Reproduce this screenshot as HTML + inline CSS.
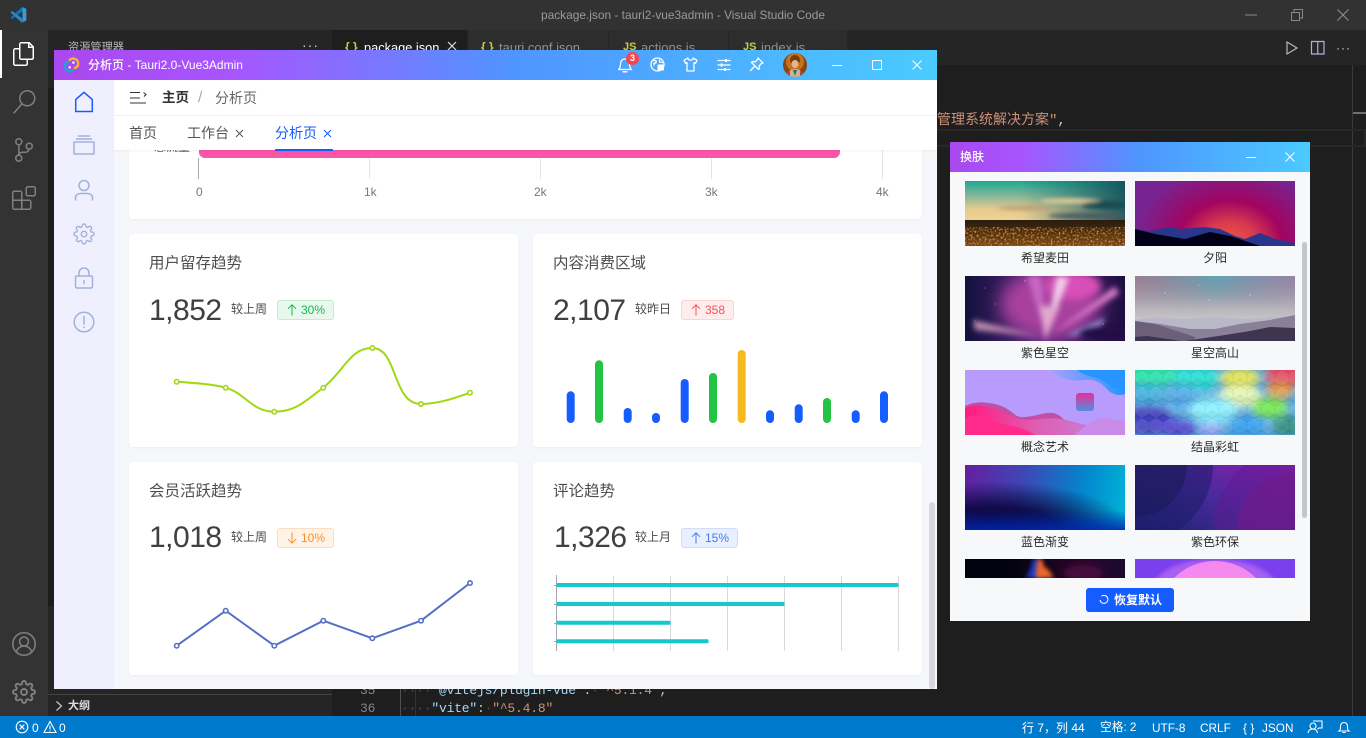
<!DOCTYPE html>
<html lang="zh-CN"><head><meta charset="utf-8"><title>package.json - tauri2-vue3admin</title>
<style>
*{box-sizing:border-box}
html,body{margin:0;padding:0;width:1366px;height:738px;overflow:hidden;background:#1e1e1e;font-family:"Liberation Sans","Noto Sans CJK SC",sans-serif}
.a{position:absolute}
.t{position:absolute;white-space:nowrap}
svg{position:absolute;overflow:visible;display:block}
.grad{background:linear-gradient(90deg,#a948ee 0%,#a855ff 20%,#4f95ff 52%,#4acbff 100%)}
.card{position:absolute;background:#fff;border-radius:4px;box-shadow:0 1px 2px rgba(0,0,0,.04)}
.ct{position:absolute;font-size:15.5px;line-height:22px;color:#4f4f4f;white-space:nowrap}
.num{position:absolute;font-size:30px;line-height:36px;color:#404040;letter-spacing:-.5px;white-space:nowrap}
.cmp{position:absolute;font-size:12px;line-height:18px;color:#4a4a4a;white-space:nowrap}
.tag{position:absolute;height:20px;border-radius:3px;border:1px solid;font-size:12px;line-height:18px;white-space:nowrap}
.tag svg{left:8px;top:3px;fill:none;stroke:currentColor;stroke-width:1}
.tag span{position:absolute;left:23px;top:0}
.wp{position:absolute;width:160px;height:65px;overflow:hidden}
.lb{position:absolute;width:160px;text-align:center;font-size:12px;line-height:18px;color:#2b2b2b}
.ic{fill:none;stroke:#9fb1dc;stroke-width:1.5;stroke-linecap:round;stroke-linejoin:round}
.w{fill:none;stroke:#fff;stroke-width:1.3;stroke-linecap:round;stroke-linejoin:round}
.code{position:absolute;font-family:"Liberation Mono","Noto Sans CJK SC",monospace;font-size:13px;letter-spacing:-.2px;line-height:18px;white-space:pre}
.sb{position:absolute;top:720px;font-size:12px;line-height:16px;color:#fff;white-space:nowrap}
</style></head><body>
<svg width="0" height="0" style="position:absolute"><defs>
<symbol id="gear" viewBox="0 0 24 24"><circle cx="12" cy="12" r="3"/><path d="M19.4 15a1.65 1.65 0 0 0 .33 1.82l.06.06a2 2 0 0 1 0 2.83 2 2 0 0 1-2.83 0l-.06-.06a1.65 1.65 0 0 0-1.82-.33 1.65 1.65 0 0 0-1 1.51V21a2 2 0 0 1-2 2 2 2 0 0 1-2-2v-.09A1.65 1.65 0 0 0 9 19.4a1.65 1.65 0 0 0-1.82.33l-.06.06a2 2 0 0 1-2.83 0 2 2 0 0 1 0-2.83l.06-.06a1.65 1.65 0 0 0 .33-1.82 1.65 1.65 0 0 0-1.51-1H3a2 2 0 0 1-2-2 2 2 0 0 1 2-2h.09A1.65 1.65 0 0 0 4.6 9a1.65 1.65 0 0 0-.33-1.82l-.06-.06a2 2 0 0 1 0-2.83 2 2 0 0 1 2.83 0l.06.06a1.65 1.65 0 0 0 1.82.33H9a1.65 1.65 0 0 0 1-1.51V3a2 2 0 0 1 2-2 2 2 0 0 1 2 2v.09a1.65 1.65 0 0 0 1 1.51 1.65 1.65 0 0 0 1.82-.33l.06-.06a2 2 0 0 1 2.83 0 2 2 0 0 1 0 2.83l-.06.06a1.65 1.65 0 0 0-.33 1.82V9a1.65 1.65 0 0 0 1.51 1H21a2 2 0 0 1 2 2 2 2 0 0 1-2 2h-.09a1.65 1.65 0 0 0-1.51 1z"/></symbol>
<filter id="blur2" x="-30%" y="-30%" width="160%" height="160%"><feGaussianBlur stdDeviation="2"/></filter>
<filter id="blur3" x="-30%" y="-30%" width="160%" height="160%"><feGaussianBlur stdDeviation="3"/></filter>
<filter id="blur4" x="-30%" y="-30%" width="160%" height="160%"><feGaussianBlur stdDeviation="4"/></filter>
<filter id="blur6" x="-30%" y="-30%" width="160%" height="160%"><feGaussianBlur stdDeviation="6"/></filter>
<filter id="blur8" x="-30%" y="-30%" width="160%" height="160%"><feGaussianBlur stdDeviation="8"/></filter>
</defs></svg>

<!-- VS Code chrome -->
<div class="a" style="left:0;top:0;width:1366px;height:30px;background:#323233"></div>
<svg style="left:10px;top:7px" width="16" height="16" viewBox="0 0 24 24"><path fill="#2489ca" d="M1.1 8.6s-.6-.4.1-1l1.6-1.4s.5-.5 1 0l14.4 10.9v5.2s0 .8-1 .7z"/><path fill="#1070b3" d="M4.9 12 1.1 15.4s-.4.3 0 .9l1.8 1.6s.4.5 1 0l4.1-3.1z"/><path fill="#0877b9" d="m11.7 12 7-5.4-.1-5.3s-.3-1.2-1.3-.5L8 9z"/><path fill="#3c99d4" d="M17.5 23c.4.4.9.3.9.3l5.5-2.7c.7-.5.6-1 .6-1V3.4c0-.6-.6-.8-.6-.8L19.1.3c-.9-.6-1.4.1-1.4.1s.7-.5 1 .4v21.5c0 .1 0 .3-.1.4-.1.3-.5.6-1.5.4z"/></svg>
<div class="t" style="left:541px;top:7px;font-size:11.9px;line-height:17px;color:#9a9a9a">package.json - tauri2-vue3admin - Visual Studio Code</div>
<svg style="left:1245px;top:9px" width="12" height="12"><path d="M0 6h12" stroke="#8a8a8a" stroke-width="1"/></svg>
<svg style="left:1291px;top:9px" width="12" height="12"><path d="M.5 3.5h8v8h-8zM3 3.5V.5h8.5v8.5H8.5" fill="none" stroke="#8a8a8a"/></svg>
<svg style="left:1337px;top:9px" width="12" height="12"><path d="M.5.5l11 11M11.500.5l-11 11" fill="none" stroke="#8a8a8a" stroke-width="1.2"/></svg>

<!-- activity bar -->
<div class="a" style="left:0;top:30px;width:48px;height:686px;background:#333"></div>
<div class="a" style="left:0;top:30px;width:2px;height:48px;background:#fff"></div>
<svg style="left:12px;top:42px" width="24" height="24" viewBox="0 0 24 24"><path fill="#fff" d="M17.5 0h-9L7 1.5V6H2.500L1 7.500v15.070L2.500 24h12.070L16 22.570V18h4.700l1.300-1.430V4.500L17.500 0zm0 2.120l2.380 2.380H17.500V2.120zm-3 20.380h-12v-15H7v9.070L8.500 18h6v4.500zm6-6h-12v-15H16V6h4.500v10.500z"/></svg>
<svg style="left:12px;top:90px" width="24" height="24" viewBox="0 0 24 24"><path fill="#808080" d="M15.250 0a8.250 8.250 0 0 0-6.180 13.720L1 22.880l1.120 1 8.050-9.120A8.251 8.251 0 1 0 15.250.01V0zm0 15a6.750 6.750 0 1 1 0-13.500 6.750 6.750 0 0 1 0 13.500z"/></svg>
<svg style="left:12px;top:138px" width="24" height="24" viewBox="0 0 24 24"><path fill="#808080" d="M21.007 8.222A3.738 3.738 0 0 0 15.045 5.200a3.737 3.737 0 0 0 1.156 6.583 2.988 2.988 0 0 1-2.668 1.670h-2.990a4.456 4.456 0 0 0-2.989 1.165V7.400a3.737 3.737 0 1 0-1.494 0v9.117a3.776 3.776 0 1 0 1.816.099 2.990 2.990 0 0 1 2.668-1.667h2.990a4.484 4.484 0 0 0 4.223-3.039 3.736 3.736 0 0 0 3.250-3.687zM4.565 3.738a2.242 2.242 0 1 1 4.484 0 2.242 2.242 0 0 1-4.484 0zm4.484 16.441a2.242 2.242 0 1 1-4.484 0 2.242 2.242 0 0 1 4.484 0zm8.221-9.715a2.242 2.242 0 1 1 0-4.485 2.242 2.242 0 0 1 0 4.485z"/></svg>
<svg style="left:12px;top:186px" width="24" height="24" viewBox="0 0 24 24"><path fill="#808080" d="M13.500 1.500L15 0h7.500L24 1.500V9l-1.500 1.500H15L13.500 9V1.500zm1.500 0V9h7.500V1.500H15zM0 15V6l1.500-1.500H9L10.500 6v7.500H18l1.500 1.500v7.500L18 24H1.500L0 22.500V15zm9-1.500V6H1.500v7.500H9zM9 15H1.500v7.500H9V15zm1.500 7.500H18V15h-7.500v7.500z"/></svg>
<svg style="left:12px;top:632px" width="24" height="24" viewBox="0 0 24 24"><g fill="none" stroke="#808080" stroke-width="1.500"><circle cx="12" cy="12" r="11.200"/><circle cx="12" cy="9.500" r="4.500"/><path d="M4.500 20c1-4 4-6 7.500-6s6.500 2 7.500 6"/></g></svg>
<svg style="left:12px;top:680px" width="24" height="24" fill="none" stroke="#808080" stroke-width="1.900"><use href="#gear" width="24" height="24"/></svg>

<!-- sidebar -->
<div class="a" style="left:48px;top:30px;width:284px;height:686px;background:#252526"></div>
<div class="a" style="left:48px;top:88px;width:6px;height:518px;background:#1c1c1c"></div>
<div class="t" style="left:68px;top:40px;font-size:11.200px;line-height:16px;color:#bbb">资源管理器</div>
<div class="t" style="left:302px;top:36px;font-size:14px;line-height:18px;color:#ccc;letter-spacing:1px">···</div>
<div class="a" style="left:48px;top:694px;width:284px;height:1px;background:#444"></div>
<svg style="left:54px;top:700px" width="10" height="12"><path d="M2.500 1.500l5 4.500-5 4.500" fill="none" stroke="#ccc" stroke-width="1.200"/></svg>
<div class="t" style="left:68px;top:698px;font-size:11px;line-height:16px;font-weight:bold;color:#ddd">大纲</div>

<!-- tab bar -->
<div class="a" style="left:332px;top:30px;width:1034px;height:35px;background:#252526"></div>
<div class="a" style="left:332px;top:30px;width:135px;height:35px;background:#1e1e1e"></div>
<div class="a" style="left:467px;top:30px;width:141px;height:35px;background:#2d2d2d;border-left:1px solid #252526"></div>
<div class="a" style="left:608px;top:30px;width:120px;height:35px;background:#2d2d2d;border-left:1px solid #252526"></div>
<div class="a" style="left:728px;top:30px;width:120px;height:35px;background:#2d2d2d;border-left:1px solid #252526;border-right:1px solid #252526"></div>
<div class="t" style="left:345px;top:39px;font-size:12px;line-height:16px;font-weight:bold;color:#cbcb41">{ }</div>
<div class="t" style="left:364px;top:39px;font-size:12.800px;line-height:18px;color:#fff">package.json</div>
<svg style="left:447px;top:41px" width="10" height="10"><path d="M1 1l8 8M9 1l-8 8" stroke="#ddd" stroke-width="1.200"/></svg>
<div class="t" style="left:481px;top:39px;font-size:12px;line-height:16px;font-weight:bold;color:#cbcb41">{ }</div>
<div class="t" style="left:499px;top:39px;font-size:13px;line-height:18px;color:#8f8f8f">tauri.conf.json</div>
<div class="t" style="left:623px;top:39px;font-size:11px;line-height:16px;font-weight:bold;color:#cbcb41">JS</div>
<div class="t" style="left:641px;top:39px;font-size:13px;line-height:18px;color:#8f8f8f">actions.js</div>
<div class="t" style="left:743px;top:39px;font-size:11px;line-height:16px;font-weight:bold;color:#cbcb41">JS</div>
<div class="t" style="left:761px;top:39px;font-size:13px;line-height:18px;color:#8f8f8f">index.js</div>
<svg style="left:1285px;top:41px" width="14" height="14"><path d="M2 1l10 6-10 6z" fill="none" stroke="#b8b8b8" stroke-width="1.200"/></svg>
<svg style="left:1311px;top:41px" width="14" height="14"><path d="M.5.500h12.500v12.500H.5zM6.750 .5V13" fill="none" stroke="#b9a9e8" stroke-width="1.200"/></svg>
<div class="t" style="left:1336px;top:39px;font-size:12px;line-height:18px;color:#ddd;letter-spacing:1px">···</div>

<!-- editor content -->
<div class="a" style="left:1352px;top:65px;width:1px;height:651px;background:#3a3a3a"></div>
<div class="a" style="left:1353px;top:112px;width:13px;height:2px;background:#6f6f6f"></div>
<div class="a" style="left:937px;top:129px;width:429px;height:18px;border-top:2px solid #282828;border-bottom:2px solid #282828;border-right:2px solid #282828"></div>
<div class="t" style="left:937px;top:111px;font-family:'Liberation Mono','Noto Sans CJK SC',monospace;font-size:14px;line-height:20px;color:#ce9178">管理系统解决方案"<span style="color:#ccc">,</span></div>
<div class="a" style="left:400px;top:689px;width:1px;height:27px;background:#505050"></div>
<div class="a" style="left:415px;top:689px;width:1px;height:27px;background:#333"></div>
<div class="code" style="left:360px;top:682px;color:#858585">35</div>
<div class="code" style="left:360px;top:700px;color:#858585">36</div>
<div class="code" style="left:401px;top:682px"><span style="color:#4a4a4a">····</span><span style="color:#9cdcfe">"@vitejs/plugin-vue"</span><span style="color:#ccc">:</span><span style="color:#4a4a4a">·</span><span style="color:#ce9178">"^5.1.4"</span><span style="color:#ccc">,</span></div>
<div class="code" style="left:401px;top:700px"><span style="color:#4a4a4a">····</span><span style="color:#9cdcfe">"vite"</span><span style="color:#ccc">:</span><span style="color:#4a4a4a">·</span><span style="color:#ce9178">"^5.4.8"</span></div>

<!-- status bar -->
<div class="a" style="left:0;top:716px;width:1366px;height:22px;background:#007acc"></div>
<svg style="left:15px;top:720px" width="14" height="14"><g fill="none" stroke="#fff" stroke-width="1.100"><circle cx="7" cy="7" r="5.800"/><path d="M4.700 4.700l4.600 4.600M9.300 4.700l-4.600 4.600"/></g></svg>
<div class="sb" style="left:32px">0</div>
<svg style="left:43px;top:720px" width="14" height="14"><path d="M7 1.500l6 11H1z M7 5.500v4M7 10.500v1" fill="none" stroke="#fff" stroke-width="1.100"/></svg>
<div class="sb" style="left:59px">0</div>
<div class="sb" style="left:1022px">行 7，列 44</div>
<div class="sb" style="left:1100px;font-size:11.700px">空格: 2</div>
<div class="sb" style="left:1152px;font-size:11.800px">UTF-8</div>
<div class="sb" style="left:1200px;font-size:11.800px">CRLF</div>
<div class="sb" style="left:1243px">{ }</div>
<div class="sb" style="left:1262px;font-size:11.800px">JSON</div>
<svg style="left:1307px;top:720px" width="16" height="14"><g fill="none" stroke="#fff" stroke-width="1.100"><circle cx="6" cy="6" r="3"/><path d="M1 13c.5-3 2.500-4 5-4s4 1 4.500 4M6 1h9v7h-3l-1.500 1"/></g></svg>
<svg style="left:1337px;top:720px" width="14" height="14"><path d="M2 11c1.500-1 1.500-2.500 1.500-5a3.500 3.500 0 0 1 7 0c0 2.500 0 4 1.500 5zM5.500 12.500h3" fill="none" stroke="#fff" stroke-width="1.100"/></svg>

<!-- MAIN WINDOW -->
<div class="a" style="left:54px;top:50px;width:883px;height:639px;background:#f5f7fa;overflow:hidden">
  <div class="a" style="left:0;top:100px;width:883px;height:539px">
    <div class="card" style="left:75px;top:-40px;width:793px;height:109px"></div>
    <div class="t" style="left:100px;top:-12px;font-size:12px;line-height:18px;color:#666">总流量</div>
    <div class="a" style="left:145px;top:-2px;width:641px;height:10px;background:#f956a5;border-radius:0 0 6px 6px"></div>
    <div class="a" style="left:144px;top:8px;width:1px;height:21px;background:#a9a9ae"></div>
    <div class="a" style="left:315px;top:8px;width:1px;height:21px;background:#e2e4ec"></div>
    <div class="a" style="left:486px;top:8px;width:1px;height:21px;background:#e2e4ec"></div>
    <div class="a" style="left:657px;top:8px;width:1px;height:21px;background:#e2e4ec"></div>
    <div class="a" style="left:828px;top:0;width:1px;height:29px;background:#e2e4ec"></div>
    <div class="t" style="left:142px;top:34px;font-size:12px;line-height:16px;color:#777">0</div>
    <div class="t" style="left:310px;top:34px;font-size:12px;line-height:16px;color:#777">1k</div>
    <div class="t" style="left:480px;top:34px;font-size:12px;line-height:16px;color:#777">2k</div>
    <div class="t" style="left:651px;top:34px;font-size:12px;line-height:16px;color:#777">3k</div>
    <div class="t" style="left:822px;top:34px;font-size:12px;line-height:16px;color:#777">4k</div>

    <div class="card" style="left:75px;top:84px;width:389px;height:213px"></div>
    <div class="card" style="left:479px;top:84px;width:389px;height:213px"></div>
    <div class="card" style="left:75px;top:312px;width:389px;height:213px"></div>
    <div class="card" style="left:479px;top:312px;width:389px;height:213px"></div>

    <div class="ct" style="left:95px;top:103px">用户留存趋势</div>
    <div class="num" style="left:95px;top:143px">1,852</div>
    <div class="cmp" style="left:177px;top:150px">较上周</div>
    <div class="tag" style="left:223px;top:150px;width:57px;background:#e8f8ee;border-color:#c3ecd0;color:#15b84a"><svg width="12" height="12"><path d="M6 11.500V.8M2 4.800l4-4 4 4"/></svg><span>30%</span></div>

    <div class="ct" style="left:499px;top:103px">内容消费区域</div>
    <div class="num" style="left:499px;top:143px">2,107</div>
    <div class="cmp" style="left:581px;top:150px">较昨日</div>
    <div class="tag" style="left:627px;top:150px;width:53px;background:#ffecec;border-color:#fdd3d6;color:#f9505a"><svg width="12" height="12"><path d="M6 11.500V.8M2 4.800l4-4 4 4"/></svg><span>358</span></div>

    <div class="ct" style="left:95px;top:331px">会员活跃趋势</div>
    <div class="num" style="left:95px;top:370px">1,018</div>
    <div class="cmp" style="left:177px;top:378px">较上周</div>
    <div class="tag" style="left:223px;top:378px;width:57px;background:#fff2e6;border-color:#fddcc0;color:#ff8f26"><svg width="12" height="12"><path d="M6 .5v10.700M2 7.200l4 4 4-4"/></svg><span>10%</span></div>

    <div class="ct" style="left:499px;top:331px">评论趋势</div>
    <div class="num" style="left:500px;top:370px">1,326</div>
    <div class="cmp" style="left:581px;top:378px">较上月</div>
    <div class="tag" style="left:627px;top:378px;width:57px;background:#e8effe;border-color:#cfdcfb;color:#3f7bf5"><svg width="12" height="12"><path d="M6 11.500V.8M2 4.800l4-4 4 4"/></svg><span>15%</span></div>

    <!-- scrollbar -->
    <div class="a" style="left:875px;top:352px;width:6px;height:187px;background:#d6d8dd;border-radius:3px"></div>
  </div>

  <!-- Charts (page coords shifted) -->
  <svg style="left:-54px;top:-50px" width="1366" height="738" viewBox="0 0 1366 738">
    <path d="M176.700 381.700C195 383 212 384 225.700 387.700C245 393 252 411.700 274.300 411.700C296 411.700 305 401 323.300 387.700C345 370 350 348 372.300 348C398 348 392 404 421 404C438 404 455 398 470 392.700" fill="none" stroke="#a0d911" stroke-width="2"/>
    <g fill="#fff" stroke="#a0d911" stroke-width="1.600"><circle cx="176.700" cy="381.700" r="2.200"/><circle cx="225.700" cy="387.700" r="2.200"/><circle cx="274.300" cy="411.700" r="2.200"/><circle cx="323.300" cy="387.700" r="2.200"/><circle cx="372.300" cy="348" r="2.200"/><circle cx="421" cy="404" r="2.200"/><circle cx="470" cy="392.700" r="2.200"/></g>
    <path d="M176.700 645.700L225.700 610.700L274.300 645.700L323.300 620.700L372.300 638.300L421 620.700L470 583" fill="none" stroke="#5470c6" stroke-width="2"/>
    <g fill="#fff" stroke="#5470c6" stroke-width="1.600"><circle cx="176.700" cy="645.700" r="2.200"/><circle cx="225.700" cy="610.700" r="2.200"/><circle cx="274.300" cy="645.700" r="2.200"/><circle cx="323.300" cy="620.700" r="2.200"/><circle cx="372.300" cy="638.300" r="2.200"/><circle cx="421" cy="620.700" r="2.200"/><circle cx="470" cy="583" r="2.200"/></g>
    <g>
      <rect x="566.700" y="391.300" width="8" height="31.700" rx="4" fill="#165dff"/>
      <rect x="595" y="360.300" width="8" height="62.700" rx="4" fill="#23c343"/>
      <rect x="623.700" y="408" width="8" height="15" rx="4" fill="#165dff"/>
      <rect x="652" y="413" width="8" height="10" rx="4" fill="#165dff"/>
      <rect x="680.700" y="379" width="8" height="44" rx="4" fill="#165dff"/>
      <rect x="709" y="373" width="8" height="50" rx="4" fill="#23c343"/>
      <rect x="737.700" y="350" width="8" height="73" rx="4" fill="#f7ba1e"/>
      <rect x="766" y="410.300" width="8" height="12.700" rx="4" fill="#165dff"/>
      <rect x="794.700" y="404.300" width="8" height="18.700" rx="4" fill="#165dff"/>
      <rect x="823" y="398" width="8" height="25" rx="4" fill="#23c343"/>
      <rect x="851.700" y="410.300" width="8" height="12.700" rx="4" fill="#165dff"/>
      <rect x="880" y="391.300" width="8" height="31.700" rx="4" fill="#165dff"/>
    </g>
    <g fill="#d9d9dc">
      <rect x="613" y="576" width="1" height="75"/><rect x="670" y="576" width="1" height="75"/><rect x="727" y="576" width="1" height="75"/><rect x="784" y="576" width="1" height="75"/><rect x="841" y="576" width="1" height="75"/><rect x="898" y="576" width="1" height="75"/>
    </g>
    <rect x="556" y="575" width="1" height="76" fill="#a6a6b0"/>
    <g fill="#a6a6b0"><rect x="554" y="585" width="2" height="1"/><rect x="554" y="604" width="2" height="1"/><rect x="554" y="623" width="2" height="1"/><rect x="554" y="641" width="2" height="1"/></g>
    <g fill="#13c9cc">
      <rect x="556.500" y="583" width="342" height="4" rx="1"/>
      <rect x="556.500" y="602" width="228" height="4" rx="1"/>
      <rect x="556.500" y="620.700" width="114" height="4" rx="1"/>
      <rect x="556.500" y="639.300" width="152" height="4" rx="1"/>
    </g>
  </svg>

  <!-- Sidebar -->
  <div class="a" style="left:0;top:30px;width:60px;height:609px;background:#f0effd"></div>
  <svg style="left:20px;top:41px" width="20" height="22" viewBox="0 0 20 22"><path d="M1.700 8.600L10 1.300l8.300 7.300v11.900H1.700z" fill="none" stroke="#165dff" stroke-width="1.500" stroke-linejoin="round"/></svg>
  <svg style="left:19px;top:84px" width="22" height="22" viewBox="0 0 22 22"><path class="ic" d="M1 8h20v12H1zM3.500 5h15M5.500 2h11"/></svg>
  <svg style="left:20px;top:129px" width="20" height="22" viewBox="0 0 20 22"><g class="ic"><circle cx="10" cy="6.500" r="5"/><path d="M1.500 21v-2c0-3 2.500-4.500 5-4.500h7c2.500 0 5 1.500 5 4.500v2"/></g></svg>
  <svg style="left:19px;top:173px" width="22" height="22" viewBox="0 0 24 24" class="ic"><use href="#gear" width="24" height="24"/></svg>
  <svg style="left:20px;top:217px" width="20" height="22" viewBox="0 0 20 22"><g class="ic"><rect x="1.500" y="9" width="17" height="12" rx="1.500"/><path d="M5 9V6a5 5 0 0 1 10 0v3M10 13.500v3"/></g></svg>
  <svg style="left:19px;top:261px" width="22" height="22" viewBox="0 0 22 22"><g class="ic"><circle cx="11" cy="11" r="9.800"/><path d="M11 5.500v7.500M11 16v.5"/></g></svg>

  <!-- Header -->
  <div class="a" style="left:60px;top:30px;width:823px;height:36px;background:#fff;border-bottom:1px solid #f2f3f5"></div>
  <svg style="left:76px;top:41px" width="18" height="14" viewBox="0 0 18 14"><path d="M0 1.500h10M0 7h10M0 12h16M13.500 1.500l2.500 2-2 2" fill="none" stroke="#333" stroke-width="1.100"/></svg>
  <div class="t" style="left:108px;top:38px;font-size:13.500px;line-height:20px;font-weight:bold;color:#333">主页</div>
  <div class="t" style="left:144px;top:38px;font-size:16px;line-height:20px;color:#aaa">/</div>
  <div class="t" style="left:161px;top:38px;font-size:14px;line-height:20px;color:#666">分析页</div>
  <div class="a" style="left:60px;top:66px;width:823px;height:34px;background:#fff;box-shadow:0 1px 2px rgba(0,0,0,.05)"></div>
  <div class="t" style="left:75px;top:73px;font-size:14px;line-height:20px;color:#555">首页</div>
  <div class="t" style="left:133px;top:73px;font-size:14px;line-height:20px;color:#555">工作台</div>
  <svg style="left:181px;top:79px" width="9" height="9"><path d="M1 1l7 7M8 1l-7 7" stroke="#555" stroke-width="1"/></svg>
  <div class="t" style="left:221px;top:73px;font-size:14px;line-height:20px;color:#165dff">分析页</div>
  <svg style="left:269px;top:79px" width="9" height="9"><path d="M1 1l7 7M8 1l-7 7" stroke="#165dff" stroke-width="1"/></svg>
  <div class="a" style="left:221px;top:99px;width:58px;height:2px;background:#165dff"></div>

  <!-- Title bar -->
  <div class="a grad" style="left:0;top:0;width:883px;height:30px"></div>
  <svg style="left:9px;top:6px" width="17" height="18" viewBox="0 0 18 18"><g fill="none" stroke-width="2.600"><path d="M6.500 4.500A5.200 5.200 0 0 1 16 8c0 2.600-2.200 4.200-4.500 4.200" stroke="#f7b52c"/><path d="M11.500 13.500A5.200 5.200 0 0 1 2 10c0-2.600 2.200-4.200 4.500-4.200" stroke="#19a7d8"/></g><circle cx="11" cy="6.500" r="1.300" fill="#fff"/><circle cx="7" cy="11.500" r="1.300" fill="#fff"/></svg>
  <div class="t" style="left:34px;top:6px;font-size:12px;line-height:18px;color:#fff;font-weight:500">分析页 - Tauri2.0-Vue3Admin</div>
  <svg style="left:563px;top:7px" width="16" height="16" viewBox="0 0 16 16"><path class="w" d="M1.500 12.500c1.500-1 2-2.500 2-6a4.500 4.500 0 0 1 9 0c0 3.500.5 5 2 6zM6 14.800h4"/></svg>
  <div class="a" style="left:572px;top:2px;width:13px;height:13px;border-radius:50%;background:#f5454f;color:#fff;font-size:9px;line-height:13px;text-align:center;font-weight:bold">3</div>
  <svg style="left:596px;top:7px" width="15" height="15" viewBox="0 0 15 15"><g class="w"><circle cx="7.500" cy="7.500" r="6.500"/><path d="M3 3.500h3v2.500H4v2M13 5.500L9.500 5V3"/></g><rect x="7.500" y="7.500" width="6.500" height="6" rx="1" fill="#fff"/></svg>
  <svg style="left:629px;top:7px" width="15" height="15" viewBox="0 0 15 15"><path class="w" d="M4.800 1L1 3.300l1.500 3 1.500-.7V14h7V5.600l1.500.7 1.500-3L10.200 1c-.3 1.500-1.300 2.200-2.700 2.200S5.100 2.500 4.800 1z"/></svg>
  <svg style="left:663px;top:8px" width="14" height="14" viewBox="0 0 14 14"><path class="w" d="M1 2.500h12M1 7h12M1 11.500h12"/><g fill="#fff"><rect x="8" y="1" width="2" height="3"/><rect x="3.500" y="5.500" width="2" height="3"/><rect x="7" y="10" width="2" height="3"/></g></svg>
  <svg style="left:695px;top:7px" width="15" height="15" viewBox="0 0 15 15"><path class="w" d="M9 1l5 5-1.500.5L10 9l.5 2.500-1 1L6 9 1.500 13.500 6 9 2.500 5.500l1-1L6 5l2.500-2.500z"/></svg>
  <svg style="left:729px;top:3px" width="24" height="24" viewBox="0 0 24 24"><defs><clipPath id="av"><circle cx="12" cy="12" r="12"/></clipPath></defs><g clip-path="url(#av)"><rect width="24" height="24" fill="#8a4514"/><circle cx="12" cy="9" r="9" fill="#c8711c"/><circle cx="12" cy="7" r="5" fill="#7a3a10"/><ellipse cx="12" cy="11" rx="3.500" ry="4" fill="#e2b68c"/><path d="M4 24c0-6 4-8 8-8s8 2 8 8z" fill="#c9b49a"/><path d="M10 17l2 6 2-6z" fill="#2f6f66"/><path d="M3 20l4-2v6H3zM21 20l-4-2v6h4z" fill="#b5482a"/></g></svg>
  <svg style="left:777px;top:9px" width="12" height="12"><path d="M1 6.500h10" stroke="#fff" stroke-width="1"/></svg>
  <svg style="left:818px;top:10px" width="10" height="10"><rect x=".5" y=".5" width="9" height="9" fill="none" stroke="#fff" stroke-width="1"/></svg>
  <svg style="left:858px;top:10px" width="10" height="10"><path d="M.5.5l9 9M9.500.5l-9 9" stroke="#fff" stroke-width="1"/></svg>
</div>

<!-- SKIN WINDOW -->
<div class="a" style="left:950px;top:142px;width:360px;height:479px;background:#f7f8fa;overflow:hidden">
  <div class="a grad" style="left:0;top:0;width:360px;height:30px"></div>
  <div class="t" style="left:10px;top:6px;font-size:12px;line-height:18px;color:#fff;font-weight:500">换肤</div>
  <svg style="left:295px;top:9px" width="12" height="12"><path d="M1 6.500h10" stroke="#fff" stroke-width="1"/></svg>
  <svg style="left:335px;top:10px" width="10" height="10"><path d="M.5.5l9 9M9.500.5l-9 9" stroke="#fff" stroke-width="1"/></svg>
  <div class="a" style="left:352px;top:100px;width:5px;height:276px;background:#c4c6cc;border-radius:3px"></div>

  <!-- 1 -->
  <div class="wp" style="left:15px;top:39px"><svg width="160" height="65" viewBox="0 0 160 65">
    <defs><linearGradient id="s1" x1="0" y1="0" x2="0" y2="1"><stop offset="0" stop-color="#1ea892"/><stop offset=".35" stop-color="#7fb598"/><stop offset=".7" stop-color="#e6cb8f"/><stop offset="1" stop-color="#efd193"/></linearGradient>
    <linearGradient id="s1b" x1="0" y1="0" x2="1" y2="0"><stop offset=".35" stop-color="#1a6a70" stop-opacity="0"/><stop offset="1" stop-color="#13535c" stop-opacity=".95"/></linearGradient>
    <linearGradient id="s1c" x1="0" y1="0" x2="0" y2="1"><stop offset="0" stop-color="#2a1c0c"/><stop offset=".3" stop-color="#3a2610"/><stop offset="1" stop-color="#74481a"/></linearGradient>
    <filter id="grain" color-interpolation-filters="sRGB" x="0" y="0" width="100%" height="100%"><feTurbulence type="fractalNoise" baseFrequency=".5" numOctaves="2" seed="4"/><feColorMatrix values="0 0 0 0 .86  0 0 0 0 .5  0 0 0 0 .12  0 0 0 4 -1.900"/></filter></defs>
    <rect width="160" height="40" fill="url(#s1)"/><rect width="160" height="40" fill="url(#s1b)"/>
    <g filter="url(#blur2)"><ellipse cx="105" cy="20" rx="30" ry="2.500" fill="#e8d09a"/><ellipse cx="60" cy="27" rx="28" ry="2" fill="#b89a72"/><ellipse cx="140" cy="24" rx="24" ry="4" fill="#174a52"/><ellipse cx="125" cy="35" rx="42" ry="3" fill="#4a5a60"/></g>
    <rect y="39" width="160" height="26" fill="url(#s1c)"/>
    <rect y="46" width="160" height="19" filter="url(#grain)"/>
  </svg></div>
  <div class="lb" style="left:15px;top:107px">希望麦田</div>
  <!-- 2 -->
  <div class="wp" style="left:185px;top:39px"><svg width="160" height="65" viewBox="0 0 160 65">
    <defs><radialGradient id="s2" gradientUnits="userSpaceOnUse" cx="95" cy="62" r="95" gradientTransform="matrix(1 0 0 .8 0 12)"><stop offset="0" stop-color="#ee5a3c"/><stop offset=".28" stop-color="#d83a50"/><stop offset=".55" stop-color="#a20460"/><stop offset="1" stop-color="#772490"/></radialGradient></defs>
    <rect width="160" height="65" fill="url(#s2)"/>
    <path d="M0 48L15 50L35 46L45 48L70 46L85 48L100 55L110 58L125 52L140 58L160 62V65H0z" fill="#29368c"/>
    <path d="M0 48L20 53L50 58L75 51L95 55L125 65H0z" fill="#010017"/>
  </svg></div>
  <div class="lb" style="left:185px;top:107px">夕阳</div>
  <!-- 3 -->
  <div class="wp" style="left:15px;top:134px"><svg width="160" height="65" viewBox="0 0 160 65">
    <defs><linearGradient id="s3" x1="0" y1="0" x2="1" y2="0"><stop offset="0" stop-color="#12103c"/><stop offset=".5" stop-color="#5a2a80"/><stop offset="1" stop-color="#1e0e40"/></linearGradient></defs>
    <rect width="160" height="65" fill="url(#s3)"/>
    <ellipse cx="85" cy="28" rx="50" ry="34" fill="#a8409e" filter="url(#blur8)"/>
    <ellipse cx="108" cy="10" rx="28" ry="14" fill="#d850b8" filter="url(#blur4)"/>
    <g filter="url(#blur3)">
      <path d="M80 62L92 0L104 2z" fill="#f0cde8"/><path d="M82 62L62 0L76 0z" fill="#c868c4"/><path d="M85 60L150 10L154 18z" fill="#d878c8"/>
      <path d="M75 60L8 44L10 54z" fill="#c08cb0"/><path d="M100 60L140 42L134 56z" fill="#a8a0e0"/><path d="M80 64L75 30L95 30z" fill="#e0a8d0"/>
    </g>
    <ellipse cx="140" cy="58" rx="26" ry="8" fill="#230c47" filter="url(#blur3)"/>
    <g fill="#fff"><circle cx="60" cy="5" r=".5"/><circle cx="20" cy="12" r=".4"/><circle cx="10" cy="45" r=".4"/><circle cx="138" cy="48" r=".5"/><circle cx="30" cy="28" r=".4"/></g>
  </svg></div>
  <div class="lb" style="left:15px;top:202px">紫色星空</div>
  <!-- 4 -->
  <div class="wp" style="left:185px;top:134px"><svg width="160" height="65" viewBox="0 0 160 65">
    <defs><linearGradient id="s4" x1="0" y1="0" x2="0" y2="1"><stop offset="0" stop-color="#8a7d95"/><stop offset=".7" stop-color="#c9c9ca"/></linearGradient>
    <linearGradient id="s4b" x1="0" y1="0" x2="1" y2="0"><stop offset="0" stop-color="#a58090" stop-opacity=".6"/><stop offset=".5" stop-color="#5ea8b8" stop-opacity=".9"/><stop offset="1" stop-color="#9a8ab0" stop-opacity=".6"/></linearGradient>
    <linearGradient id="m4" x1="0" y1="0" x2="0" y2="1"><stop offset="0" stop-color="#fff"/><stop offset=".7" stop-color="#fff" stop-opacity="0"/></linearGradient>
    <mask id="mk4"><rect width="160" height="45" fill="url(#m4)"/></mask></defs>
    <rect width="160" height="65" fill="url(#s4)"/><rect width="160" height="65" fill="url(#s4b)" mask="url(#mk4)"/>
    <path d="M0 44l20-3 25 2 35-2 30 2 30-2 20-1v25H0z" fill="#b9b8c8"/>
    <path d="M0 45l25 3 30 5 25 0 25-5 30-4 25-5v26H0z" fill="#8a8098"/>
    <path d="M0 45l20 3 25 8 15 5v4H0z" fill="#6b6078"/>
    <path d="M50 65l40-6 25-4 20-4 25 1v13z" fill="#3f354f"/>
    <path d="M0 61l12-1 14 2 20 3H0z" fill="#3f354f"/>
    <g fill="#fff"><circle cx="74" cy="24" r=".5"/><circle cx="30" cy="17" r=".5"/><circle cx="115" cy="19" r=".5"/><circle cx="64" cy="9" r=".4"/></g>
  </svg></div>
  <div class="lb" style="left:185px;top:202px">星空高山</div>
  <!-- 5 -->
  <div class="wp" style="left:15px;top:228px"><svg width="160" height="65" viewBox="0 0 160 65">
    <defs><linearGradient id="s5" x1="0" y1="0" x2="1" y2="0"><stop offset="0" stop-color="#a7a2ff"/><stop offset="1" stop-color="#2794ff"/></linearGradient>
    <linearGradient id="s5b" x1="0" y1="0" x2="0" y2="1"><stop offset="0" stop-color="#ec2c96"/><stop offset="1" stop-color="#4f8fe0"/></linearGradient>
    <linearGradient id="s5c" x1="0" y1="0" x2="1" y2="0"><stop offset="0" stop-color="#ff1a80"/><stop offset=".45" stop-color="#df5eb0"/><stop offset="1" stop-color="#bd8ce8"/></linearGradient></defs>
    <rect width="160" height="65" fill="#b79cfd"/>
    <path d="M85 0c10 8 20 12 35 10s20 8 25 12c5 3 10 4 15 2V0z" fill="url(#s5)"/>
    <path d="M112 0c10 8 22 6 31 14 5 5 10 5 17 4V0z" fill="#2794ff"/>
    <rect x="111" y="23" width="18" height="18" rx="3" fill="url(#s5b)"/>
    <path d="M0 36c10-5 20-4 30-2 12 3 16 8 22 12 10 4 24-4 36-3 6 1 10 6 14 9 15 6 40 13 58 13H0z" fill="#c54ea5"/>
    <path d="M0 38c12-5 22-2 32 2 12 5 20 9 30 10 12 0 22-3 34-1 16 3 30 8 64 16H0z" fill="url(#s5c)"/>
    <path d="M0 48c10-5 20-3 30 3 12 6 25 4 40 14H0z" fill="#ff2a8a"/>
    <path d="M110 65c8-8 20-17 30-17 8 0 14 3 20 3v14z" fill="#c88ce8"/>
  </svg></div>
  <div class="lb" style="left:15px;top:296px">概念艺术</div>
  <!-- 6 -->
  <div class="wp" style="left:185px;top:228px"><svg width="160" height="65" viewBox="0 0 160 65">
    <defs><pattern id="hex" width="14" height="16" patternUnits="userSpaceOnUse"><path d="M0 4l7-4 7 4v8l-7 4-7-4z" fill="#fff" fill-opacity=".1" stroke="#000" stroke-opacity=".1" stroke-width=".7"/><path d="M7 8l7 4v8H0v-8z" fill="#000" fill-opacity=".05"/></pattern></defs>
    <rect width="160" height="65" fill="#5aa8e0"/>
    <g filter="url(#blur4)">
      <ellipse cx="18" cy="4" rx="32" ry="12" fill="#28e0a8"/>
      <ellipse cx="62" cy="8" rx="24" ry="12" fill="#22dcd0"/>
      <ellipse cx="105" cy="8" rx="20" ry="10" fill="#e0e050"/>
      <ellipse cx="150" cy="5" rx="20" ry="12" fill="#e24a60"/>
      <ellipse cx="145" cy="20" rx="14" ry="8" fill="#e09a4a"/>
      <ellipse cx="105" cy="26" rx="22" ry="11" fill="#e4f4b4"/>
      <ellipse cx="135" cy="38" rx="18" ry="10" fill="#70e850"/>
      <ellipse cx="12" cy="24" rx="18" ry="10" fill="#40b0e0"/>
      <ellipse cx="50" cy="28" rx="20" ry="12" fill="#50a8e8"/>
      <ellipse cx="12" cy="50" rx="26" ry="15" fill="#4240c0"/>
      <ellipse cx="42" cy="58" rx="20" ry="8" fill="#5040d0"/>
      <ellipse cx="78" cy="40" rx="24" ry="13" fill="#88f0ff"/>
      <ellipse cx="76" cy="60" rx="12" ry="5" fill="#a8a8ff"/>
      <ellipse cx="112" cy="56" rx="18" ry="8" fill="#2c9cf0"/>
      <ellipse cx="152" cy="56" rx="14" ry="9" fill="#2a8a78"/>
    </g>
    <rect width="160" height="65" fill="url(#hex)"/>
  </svg></div>
  <div class="lb" style="left:185px;top:296px">结晶彩虹</div>
  <!-- 7 -->
  <div class="wp" style="left:15px;top:323px;background:linear-gradient(0deg,rgba(0,40,180,.85) 0,rgba(0,40,180,0) 30%),radial-gradient(ellipse 85% 70% at 18% 95%,rgba(8,4,60,1) 0,rgba(8,4,60,.85) 45%,rgba(8,4,60,0) 100%),linear-gradient(100deg,#651fa0 0%,#3f46b5 35%,#0484cc 70%,#00b6d8 100%)"></div>
  <div class="lb" style="left:15px;top:391px">蓝色渐变</div>
  <!-- 8 -->
  <div class="wp" style="left:185px;top:323px"><svg width="160" height="65" viewBox="0 0 160 65">
    <defs><linearGradient id="s8" x1="0" y1="1" x2="1" y2="0"><stop offset="0" stop-color="#1a2470"/><stop offset=".5" stop-color="#4a2a9c"/><stop offset="1" stop-color="#8f1fb0"/></linearGradient></defs>
    <rect width="160" height="65" fill="url(#s8)"/>
    <circle cx="0" cy="0" r="78" fill="#1c1c68" opacity=".55"/><circle cx="0" cy="0" r="52" fill="#1a1a58" opacity=".6"/>
    <circle cx="160" cy="65" r="82" fill="#5d1a90" opacity=".5"/><circle cx="160" cy="65" r="58" fill="#6e1b8a" opacity=".7"/>
  </svg></div>
  <div class="lb" style="left:185px;top:391px">紫色环保</div>
  <!-- 9, 10 -->
  <div class="wp" style="left:15px;top:417px;height:19px"><svg width="160" height="19" viewBox="0 0 160 19">
    <defs><linearGradient id="s9" x1="0" y1="0" x2="1" y2="0"><stop offset=".3" stop-color="#03030f"/><stop offset=".75" stop-color="#2a0528"/><stop offset="1" stop-color="#1a0a30"/></linearGradient></defs>
    <rect width="160" height="19" fill="url(#s9)"/>
    <path d="M60 19c4-4 6-10 8-19h6c0 8 2 14 4 19z" fill="#1f3ac8" filter="url(#blur2)"/>
    <path d="M70 19c2-6 1-12 3-19h4c2 5 0 8 6 10l6 9z" fill="#f0662a" filter="url(#blur2)"/>
    <ellipse cx="118" cy="14" rx="20" ry="8" fill="#4a0840" filter="url(#blur4)"/>
  </svg></div>
  <div class="wp" style="left:185px;top:417px;height:19px"><svg width="160" height="19" viewBox="0 0 160 19">
    <rect width="160" height="19" fill="#7a40ee"/>
    <ellipse cx="80" cy="30" rx="62" ry="30" fill="#a860f0" filter="url(#blur2)"/>
    <circle cx="80" cy="60" r="58" fill="#f589f0"/>
  </svg></div>

  <div class="a" style="left:136px;top:446px;width:88px;height:24px;background:#165dff;border-radius:3px"></div>
  <svg style="left:149px;top:453px" width="10" height="10" viewBox="0 0 10 10"><path d="M2.500 1.200A4 4 0 1 1 1 5" fill="none" stroke="#fff" stroke-width="1"/></svg>
  <div class="t" style="left:164px;top:449px;font-size:12px;line-height:18px;font-weight:bold;color:#fff">恢复默认</div>
</div>
</body></html>
